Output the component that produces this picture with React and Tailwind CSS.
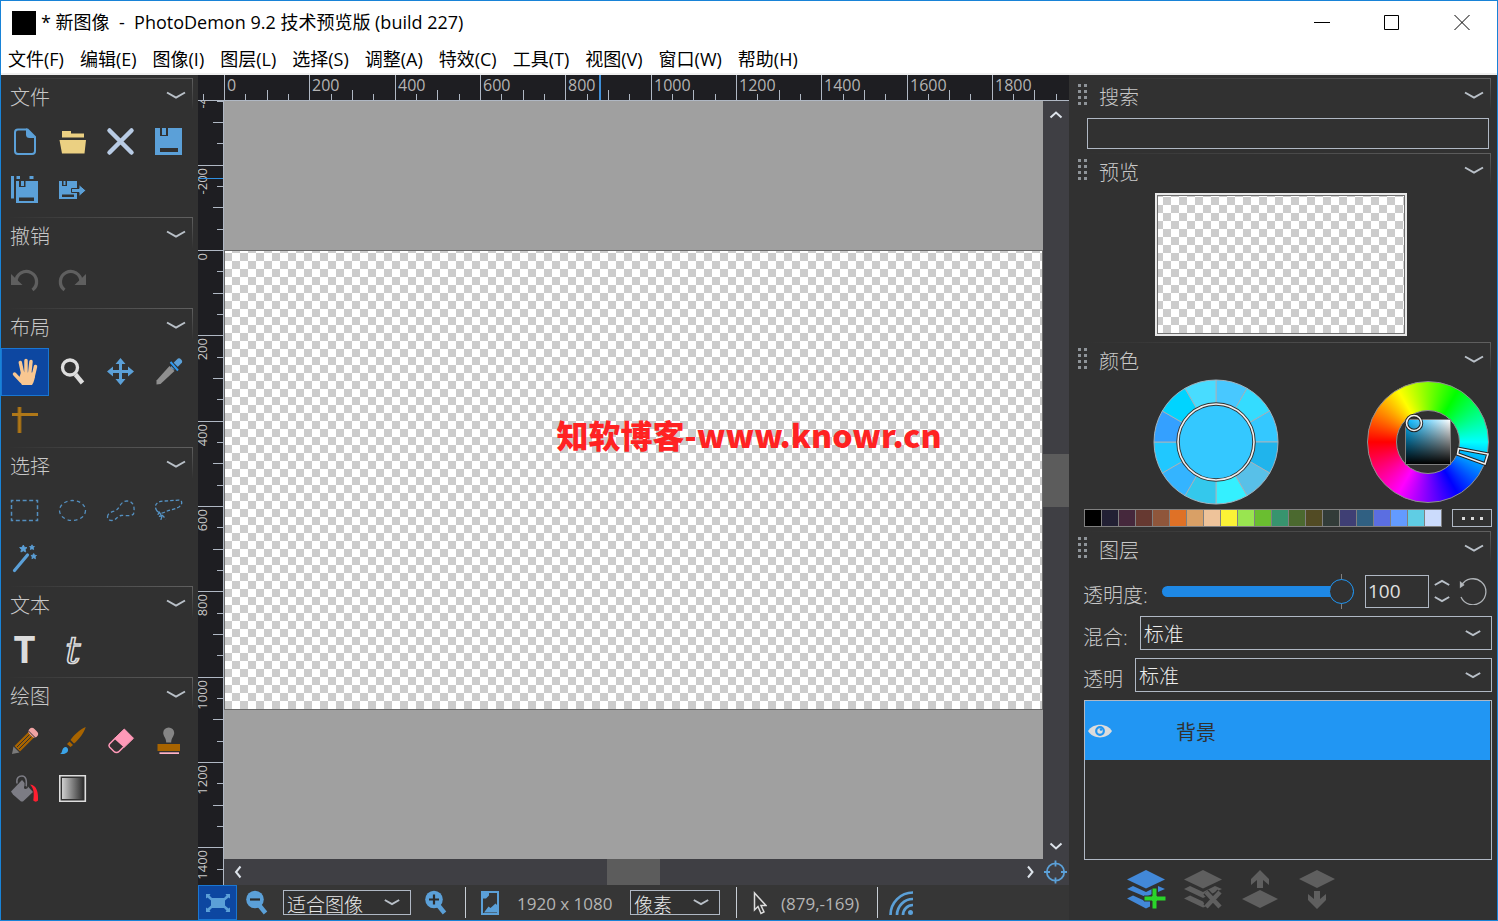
import React, { useState } from "react";

const MENUS = [
  "文件(F)",
  "编辑(E)",
  "图像(I)",
  "图层(L)",
  "选择(S)",
  "调整(A)",
  "特效(C)",
  "工具(T)",
  "视图(V)",
  "窗口(W)",
  "帮助(H)",
];

const SWATCHES = [
  "#000000", "#222034", "#45283c", "#663931", "#8f563b", "#df7126", "#d9a066",
  "#eec39a", "#fbf236", "#99e550", "#6abe30", "#37946e", "#4b692f", "#524b24",
  "#323c39", "#3f3f74", "#306082", "#5b6ee1", "#639bff", "#5fcde4", "#cbdbfc",
];

// Clockwise from twelve o'clock
const VARIANTS = [
  "#48c8ff", "#34dcff", "#34c8ff", "#20b4ec", "#58c0e8", "#34f0ff",
  "#34c8ec", "#34b4ff", "#20c8ff", "#34a0ff", "#00d4ff", "#48dcff",
];

const BLUE = "#5ba0d8";
const DIM = "#5f5f5f";
const BG = "#313131";

// ---------- toolbox icons, all drawn on a 48px button ----------

function Glyph({ children }) {
  return (
    <svg viewBox="0 0 48 48" className="size-12 overflow-visible" fill="none" aria-hidden="true">
      {children}
    </svg>
  );
}

const ICONS = {
  new: (
    <>
      <path d="M26 11.500H17a3 3 0 0 0-3 3V33a3 3 0 0 0 3 3H31a3 3 0 0 0 3-3V19" stroke={BLUE} strokeWidth="2" />
      <path d="M25 10.500h2L35 18.500v1.500h-6.500a3.500 3.500 0 0 1-3.500-3.500z" fill={BLUE} />
    </>
  ),
  open: (
    <path d="M13 13h9v2.500h13v4H13zM10.500 22H37l-1.500 13.500h-22.500z" fill="#ebd082" />
  ),
  close: (
    <path d="M12.500 12.500l22 22M34.500 12.500l-22 22" stroke="#b8cbe4" strokeWidth="4.500" strokeLinecap="round" />
  ),
  save: (
    <>
      <path d="M10 10h27v27H10z" fill={BLUE} />
      <path d="M15 10h8v8h-8zM15 30h18v4H15z" fill={BG} />
      <path d="M17 10h4v7h-4z" fill={BLUE} />
    </>
  ),
  saveAll: (
    <>
      <path d="M10 10h3v22.500h-3zM15.500 10H19v3h-3.500zM28.500 10h4v3h-4zM15 15h22v22H15z" fill={BLUE} />
      <path d="M18 15h6.500v6H18zM18 31.500h15v3.500H18z" fill={BG} />
      <path d="M20 15h3v5h-3z" fill={BLUE} />
    </>
  ),
  saveAs: (
    <>
      <path d="M10 15h18v18H10z" fill={BLUE} />
      <path d="M13 15h5v5h-5zM13 28.500h12v2.500H13z" fill={BG} />
      <path d="M14.500 15h2v4h-2z" fill={BLUE} />
      <path d="M22.500 22.500H30v-4l7 6-7 6v-4h-7.500z" fill={BLUE} stroke={BG} strokeWidth="1" />
    </>
  ),
  undo: (
    <>
      <path d="M15 24.500A10.300 10.300 0 1 1 31.500 33" stroke={DIM} strokeWidth="3.300" />
      <path d="M10 17v11h11.500z" fill={DIM} />
    </>
  ),
  redo: (
    <>
      <path d="M32 24.500A10.300 10.300 0 1 0 15.500 33" stroke={DIM} strokeWidth="3.300" />
      <path d="M37 17v11H25.500z" fill={DIM} />
    </>
  ),
  hand: (
    <>
      <path d="M19.300 14.500L22 27M25 12.500V27M30 13.500L28.500 27M34.500 18.500L32 29" stroke="#f9c791" strokeWidth="3.500" strokeLinecap="round" />
      <path d="M13.500 26l6.500 7" stroke="#f9c791" strokeWidth="3.500" strokeLinecap="round" />
      <path d="M20 24.500h14c0 5-.5 9-3 12.500H21l-3.500-5.500z" fill="#f9c791" />
    </>
  ),
  zoom: (
    <>
      <circle cx="21" cy="19.500" r="7.500" stroke="#dedede" strokeWidth="3.300" />
      <path d="M26.500 26.500l7 8.500" stroke="#dedede" strokeWidth="4.500" />
    </>
  ),
  move: (
    <>
      <path d="M23.500 13v21M13 23.500h21" stroke={BLUE} strokeWidth="3" />
      <path d="M23.500 10l5 6h-10zM23.500 37l5-6h-10zM10 23.500l6-5v10zM37 23.500l-6-5v10z" fill={BLUE} />
    </>
  ),
  picker: (
    <>
      <path d="M11.500 36.500v-4L24.500 18l5 5L15.500 36z" fill="#8f8f8f" />
      <path d="M29 18.500l5-5" stroke={BLUE} strokeWidth="6" strokeLinecap="round" />
      <path d="M25 14l8.500 8.500" stroke="#313131" strokeWidth="4" />
      <path d="M25.500 14l7.500 8.500" stroke="#2f9af0" strokeWidth="2" />
    </>
  ),
  guides: (
    <>
      <path d="M18.500 11v26" stroke="#8f6216" strokeWidth="4" />
      <path d="M11 18.500h26" stroke="#b07818" strokeWidth="3" />
      <path d="M18.500 11v26" stroke="#b07818" strokeWidth="2" />
    </>
  ),
  rect: (
    <rect x="10.500" y="13.500" width="26" height="20" stroke={BLUE} strokeWidth="1.500" strokeDasharray="4 2.570" strokeDashoffset="2" opacity=".85" />
  ),
  ellipse: (
    <ellipse cx="23.500" cy="23.500" rx="13" ry="10" stroke={BLUE} strokeWidth="1.300" strokeDasharray="3.500 3" opacity=".85" />
  ),
  lasso: (
    <path d="M10.500 30C10.500 25 17 25 20 22.500C23 20 24 14 30 14C37 14 38 21 36.500 27C34 30 28 28 24 28.500C20 29.500 19 33.500 15 33.500C12 33.500 10.500 32 10.500 30Z" stroke={BLUE} strokeWidth="1.300" strokeDasharray="3.500 2.500" opacity=".85" />
  ),
  polygon: (
    <g stroke={BLUE} strokeWidth="1.300" strokeDasharray="3.500 2" opacity=".9">
      <path d="M12 24C8 18 12 14 20 14L31 13.300C38 12 38 17 34 20C28 23 24 23 20 25C17 27 14 26 12 24Z" />
      <path d="M15 25C11 28 13 31 18 28M14 25l3 4-1.500 5M17 28l4 4" />
    </g>
  ),
  wand: (
    <>
      <path d="M13.500 35.500L26.500 20" stroke={BLUE} strokeWidth="3.200" strokeLinecap="round" />
      <path d="M22.300 10l1.200 2.300 2.500.3-1.800 1.800.5 2.600-2.400-1.200-2.400 1.200.5-2.600-1.800-1.800 2.500-.3zM31 9.800l.8 1.600 1.700.2-1.200 1.200.3 1.800-1.600-.9-1.600.9.300-1.800-1.200-1.200 1.700-.2zM32.700 18.500l.9 1.700 1.900.3-1.400 1.300.4 2-1.800-1-1.800 1 .4-2-1.400-1.300 1.900-.3z" fill={BLUE} stroke={BLUE} strokeWidth=".8" />
    </>
  ),
  text: (
    <text x="23.500" y="37" textAnchor="middle" fontSize="38" className="font-['Open_Sans',sans-serif] font-bold" fill="#dcdcdc">
      T
    </text>
  ),
  fancyText: (
    <text x="24" y="37" textAnchor="middle" fontSize="38" className="font-['DejaVu_Serif',serif] italic" stroke="#dcdcdc" strokeWidth="1.600">
      t
    </text>
  ),
  pencil: (
    <>
      <path d="M28 14.500L13.500 29l5.500 5.500L33.500 20z" fill="#a86400" />
      <path d="M28.500 17.500L16 30M30.500 19.500L18 32" stroke={BG} strokeWidth="1" />
      <path d="M11 37l1.500-7.500 6 6z" fill="#7a7a7a" />
      <path d="M31 14.500l2.500 2.500" stroke="#f0a3a3" strokeWidth="7" strokeLinecap="round" />
      <path d="M27 13.500l7.500 7.500" stroke={BG} strokeWidth="1" />
    </>
  ),
  brush: (
    <>
      <path d="M36.700 10C35 16 30 22.500 25 26.500L21.500 23C25 17.500 31 12.500 36.700 10Z" fill="#a86400" />
      <path d="M20.500 24.500l3.500 3.500-2.500 2-3.500-3z" fill="#a86400" />
      <path d="M11 37c2.500-1 1.500-4 3.500-6s5-.5 4.500 2.500S14 37.500 11 37z" fill="#3ba4e8" />
    </>
  ),
  eraser: (
    <>
      <path d="M27.300 12l9.200 9.300-9 8.700-9.500-9z" fill="#ff99b8" stroke="#ff99b8" strokeLinejoin="round" />
      <path d="M18 21.500l-5.500 5.500a2.500 2.500 0 0 0 0 3L17 34.500a3.500 3.500 0 0 0 5 0l5-5z" stroke="#ff99b8" strokeWidth="1.500" />
    </>
  ),
  stamp: (
    <>
      <path d="M23.700 10.500a5.500 5.500 0 0 1 5.500 5.500c0 3-3 5-3 9.500h-5c0-4.500-3-6.500-3-9.500a5.500 5.500 0 0 1 5.500-5.500z" fill="#858585" />
      <path d="M12.500 27h22.500v7H12.500z" fill="#a86400" />
      <path d="M14.500 35.300H34v1.700H14.500z" fill="#ffb3c8" />
    </>
  ),
  bucket: (
    <>
      <path d="M21 15L10 26.500 12 29.500 20 36.500h2L32 27z" fill="#7c7c84" />
      <path d="M16 18.500C15 12.500 18 11 21 11C25 11 26 15 25 23" stroke={BG} strokeWidth="3.500" />
      <path d="M16 18.500C15 12.500 18 11 21 11C25 11 26 15 25 23" stroke="#7c7c84" strokeWidth="1.500" />
      <circle cx="24.500" cy="22.500" r="1.500" fill={BG} />
      <path d="M29 19.500C36 20 37.500 28 37 35.500C36 37 33.500 37 32.300 35.500C33 29 33.500 24 29 19.500Z" fill="#ff1f30" />
    </>
  ),
  gradient: (
    <>
      <defs>
        <linearGradient id="toolGradient">
          <stop offset="0" stopColor="#cfcfcf" />
          <stop offset="1" stopColor="#313131" />
        </linearGradient>
      </defs>
      <path d="M10.800 10.800h25.500v25.500H10.800z" stroke="#dedede" strokeWidth="1.600" />
      <path d="M13 13h21v21H13z" fill="url(#toolGradient)" />
    </>
  ),
};

const TOOL_GROUPS = [
  { title: "文件", tools: [["new", "新建"], ["open", "打开"], ["close", "关闭"], ["save", "保存"], ["saveAll", "保存副本"], ["saveAs", "另存为"]] },
  { title: "撤销", tools: [["undo", "撤销"], ["redo", "重做"]] },
  { title: "布局", tools: [["hand", "手形"], ["zoom", "缩放"], ["move", "移动"], ["picker", "取色"], ["guides", "参考线"]] },
  { title: "选择", tools: [["rect", "矩形选择"], ["ellipse", "椭圆选择"], ["lasso", "套索"], ["polygon", "多边形套索"], ["wand", "魔棒"]] },
  { title: "文本", tools: [["text", "文本"], ["fancyText", "艺术文本"]] },
  { title: "绘图", tools: [["pencil", "铅笔"], ["brush", "画笔"], ["eraser", "橡皮擦"], ["stamp", "图章"], ["bucket", "填充"], ["gradient", "渐变"]] },
];

function Chevron({ className = "", up = false, thin = false }) {
  return (
    <svg viewBox="0 0 20 8" className={className || "w-5 h-2"} fill="none" stroke="#b9c0c8" strokeWidth={thin ? 2.5 : 2} aria-hidden="true">
      <path d={up ? "M1 6.500L10 1.500L19 6.500" : "M1 1.500L10 6.500L19 1.500"} />
    </svg>
  );
}

function PanelHeader({ title, grip }) {
  return (
    <div className="relative flex h-10 items-center">
      <span className="absolute top-0 right-0 left-2 h-px bg-linear-to-r from-transparent to-[#606060]" />
      <span className="absolute top-0 right-0 h-8 w-px bg-linear-to-b from-[#606060] to-transparent" />
      {grip ? (
        <span className="mr-3 mb-2 grid grid-cols-2 gap-[3px]">
          {Array.from({ length: 8 }, (_, i) => (
            <span key={i} className="size-[3px] bg-[#8f9499]" />
          ))}
        </span>
      ) : null}
      <h2 className="flex-1 pb-px text-xl leading-6 font-light text-[#c8c8c8]">{title}</h2>
      <button type="button" aria-label={title} className="mr-[7px] mb-1.5 flex">
        <Chevron />
      </button>
    </div>
  );
}

function Toolbox() {
  const [active, setActive] = useState("hand");
  return (
    <aside className="w-[197px] shrink-0 overflow-hidden bg-[#313131] pt-[3px]">
      {TOOL_GROUPS.map((group) => (
        <section key={group.title} className="mb-[3px] w-48">
          <div className="[&_h2]:pl-[9px]">
            <PanelHeader title={group.title} />
          </div>
          <div className="grid grid-cols-4">
            {group.tools.map(([id, label]) => (
              <button
                key={id}
                type="button"
                aria-label={label}
                onClick={() => setActive(id)}
                className={
                  active === id
                    ? "size-12 bg-[#0d47a1] outline-1 -outline-offset-1 outline-[#1976d2]"
                    : "size-12"
                }
              >
                <Glyph>{ICONS[id]}</Glyph>
              </button>
            ))}
          </div>
        </section>
      ))}
    </aside>
  );
}

// ---------- rulers ----------

const PX_PER_UNIT = 819 / 1920;

function ticks(from, to) {
  const out = [];
  for (let v = from; v <= to; v += 50) {
    out.push({ v, pos: Math.round(v * PX_PER_UNIT), size: v % 200 === 0 ? 26 : v % 100 === 0 ? 10 : 6 });
  }
  return out;
}

function TopRuler() {
  return (
    <div className="h-[26px] shrink-0 overflow-hidden border-b border-[#b0b8c4] bg-[#1e1e22]">
      <svg className="h-[25px] w-full" aria-hidden="true">
        {ticks(-50, 1950).map(({ v, pos, size }) => (
          <g key={v}>
            <path d={`M${pos + 26.5} 25v-${size}`} stroke="#b0b8c4" />
            {v % 200 === 0 ? (
              <text x={pos + 29} y="16" fontSize="16" fill="#b4b4b4">
                {v}
              </text>
            ) : null}
          </g>
        ))}
        <path d="M402 0v25" stroke="#3f8fd8" strokeWidth="2" />
      </svg>
    </div>
  );
}

function SideRuler() {
  return (
    <div className="w-[26px] shrink-0 overflow-hidden border-r border-[#b0b8c4] bg-[#1e1e22]">
      <svg className="h-full w-[25px]" aria-hidden="true">
        {ticks(-400, 1450).map(({ v, pos, size }) => (
          <g key={v}>
            <path d={`M25 ${pos + 149.5}h-${size}`} stroke="#b0b8c4" />
            {v % 200 === 0 ? (
              <text transform={`translate(9 ${pos + 152}) rotate(-90)`} textAnchor="end" fontSize="13" fill="#c8c8c8">
                {v}
              </text>
            ) : null}
          </g>
        ))}
        <path d="M0 77.500h25" stroke="#2f8fe0" />
      </svg>
    </div>
  );
}

function ScrollArrow({ d, label }) {
  return (
    <button type="button" aria-label={label} className="flex size-[26px] shrink-0 items-center justify-center">
      <svg viewBox="0 0 14 14" className="size-3.5" fill="none" stroke="#dde3ea" strokeWidth="2" aria-hidden="true">
        <path d={d} />
      </svg>
    </button>
  );
}

function Workspace() {
  return (
    <div className="flex min-h-0 flex-1 flex-col">
      <TopRuler />
      <div className="flex min-h-0 flex-1">
        <SideRuler />
        <div className="flex min-w-0 flex-1 flex-col">
          <div className="flex min-h-0 flex-1">
            <div className="flex min-w-0 flex-1 items-center overflow-hidden bg-[#a0a0a0]">
              <div className="aspect-[819/460] w-full border border-[#6a6a6a] bg-[conic-gradient(#fff_25%,#ccc_0_50%,#fff_0_75%,#ccc_0)] bg-[length:16px_16px] bg-[position:-1px_2px]" />
            </div>
            <div className="flex w-[26px] shrink-0 flex-col bg-[#3f3f44]">
              <ScrollArrow label="向上滚动" d="M1.500 10.500L7 5.500L12.500 10.500" />
              <div className="flex flex-1 items-center">
                <div className="h-[53px] w-full bg-[#5c5c5c]" />
              </div>
              <ScrollArrow label="向下滚动" d="M1.500 4.500L7 9.500L12.500 4.500" />
            </div>
          </div>
          <div className="flex h-[26px] shrink-0 bg-[#3f3f44]">
            <ScrollArrow label="向左滚动" d="M10.500 1.500L6 7L10.500 12.500" />
            <div className="flex flex-1 justify-center">
              <div className="h-full w-[53px] bg-[#5c5c5c]" />
            </div>
            <ScrollArrow label="向右滚动" d="M5 1.500L9.500 7L5 12.500" />
            <button type="button" aria-label="居中" className="size-[26px]">
              <svg viewBox="0 0 26 26" className="size-[26px]" fill="none" stroke={BLUE} strokeWidth="1.800" aria-hidden="true">
                <circle cx="12.500" cy="13" r="8.700" />
                <path d="M12.500 1.500v6M12.500 18.500v6M1 13h6M18 13h6" />
              </svg>
            </button>
          </div>
        </div>
      </div>
    </div>
  );
}

// ---------- status bar ----------

function StatusSelect({ label, value, className }) {
  return (
    <div className={`relative h-[25px] ${className}`}>
      <select
        aria-label={label}
        className="h-full w-full appearance-none overflow-hidden border border-[#b0b8c4] bg-[#313131] pl-[3px] text-[19px] leading-7 font-light text-[#e8e8e8] outline-none"
      >
        <option>{value}</option>
      </select>
      <Chevron thin className="pointer-events-none absolute top-2 right-[11px] h-2 w-4" />
    </div>
  );
}

function Lens({ plus }) {
  return (
    <svg viewBox="0 0 24 26" className="h-[26px] w-6" fill="none" aria-hidden="true">
      <path d="M14 15l6.500 8" stroke={BLUE} strokeWidth="4.500" />
      <circle cx="10" cy="9.500" r="8.800" fill={BLUE} />
      <path d={plus ? "M5 9.500h10M10 4.500v10" : "M5 9.500h10"} stroke="#2b2b2b" strokeWidth="2.200" />
    </svg>
  );
}

function Divider({ className }) {
  return <span className={`h-[31px] w-px bg-[#c8ced6] ${className}`} />;
}

function StatusBar() {
  return (
    <footer className="flex h-[35px] shrink-0 items-center bg-[#363636] text-[17px] text-[#b4b4b4]">
      <button type="button" aria-label="适合窗口" className="flex h-full w-[39px] items-center justify-center border border-[#1976d2] bg-[#0d47a1]">
        <svg viewBox="0 0 24 18" className="h-[18px] w-6" fill={BLUE} aria-hidden="true">
          <path d="M0 0h4.500L3.500 1.500 6 4h12l2.500-2.500L19.500 0H24v4.500l-1.500-1L19 6.500v5l3.500 3 1.500-1V18h-4.500l1-1.500L18 14H6l-2.500 2.500 1 1.500H0v-4.500l1.500 1 3.500-3v-5l-3.500-3L0 4.500z" />
        </svg>
      </button>
      <button type="button" aria-label="缩小" className="ml-2">
        <Lens />
      </button>
      <StatusSelect label="缩放" value="适合图像" className="ml-3.5 w-32" />
      <button type="button" aria-label="放大" className="ml-[13px]">
        <Lens plus />
      </button>
      <Divider className="ml-[17px]" />
      <svg viewBox="0 0 18 24" className="ml-[15px] h-6 w-[18px]" fill="none" aria-hidden="true">
        <path d="M1 1h16v22H1z" stroke={BLUE} strokeWidth="2" />
        <path d="M2 2h6v2.500L5 7.500H2zM3 21.500l4.500-6 2 1.500 5-4.500 2 2v7z" fill={BLUE} />
      </svg>
      <span className="ml-[18px] w-[98px] pt-0.5 whitespace-nowrap">1920 x 1080</span>
      <StatusSelect label="单位" value="像素" className="ml-[15px] w-[90px]" />
      <Divider className="ml-4" />
      <svg viewBox="0 0 14 24" className="ml-4 h-6 w-3.5" fill="none" stroke="#dcdcdc" strokeWidth="1.500" aria-hidden="true">
        <path d="M1.500 2v17l3.500-3.500 3 7 3-1.500-3-6.500h5z" />
      </svg>
      <span className="ml-3.5 w-[82px] pt-0.5 whitespace-nowrap">(879,-169)</span>
      <Divider className="ml-3.5" />
      <svg viewBox="0 0 24 24" className="ml-[11px] size-6" fill="none" stroke={BLUE} strokeWidth="2.700" aria-hidden="true">
        <path d="M1.500 24A22.500 22.500 0 0 1 24 1.500M8 24A16 16 0 0 1 24 8M14 24A10 10 0 0 1 24 14" />
        <circle cx="21.500" cy="21.500" r="2.500" fill={BLUE} stroke="none" />
      </svg>
    </footer>
  );
}

// ---------- right panel ----------

function VariantWheel() {
  const point = (deg, r) => {
    const a = ((deg - 90) * Math.PI) / 180;
    return `${63 + r * Math.cos(a)} ${63 + r * Math.sin(a)}`;
  };
  return (
    <svg viewBox="0 0 126 126" className="size-[126px]" aria-hidden="true">
      {VARIANTS.map((color, i) => (
        <path
          key={i}
          d={`M63 63L${point(i * 30, 62)}A62 62 0 0 1 ${point(i * 30 + 30, 62)}Z`}
          fill={color}
          stroke="#a0b4c0"
        />
      ))}
      <circle cx="63" cy="63" r="38" fill="#34c8ff" stroke="#333" strokeWidth="3.500" />
      <circle cx="63" cy="63" r="38" fill="none" stroke="#f0f0f0" strokeWidth="1.600" />
    </svg>
  );
}

function HueWheel() {
  return (
    <div className="relative flex size-[122px] items-center justify-center rounded-full border border-[#909090] bg-[conic-gradient(from_270deg,#f00,#ff0,#0f0,#0ff,#00f,#f0f,#f00)]">
      <div className="flex size-16 items-center justify-center rounded-full border border-[#909090] bg-[#313131]">
        <div className="size-[46px] border border-[#808080] bg-[linear-gradient(to_top,#000,transparent),linear-gradient(to_right,#00b4ff,#fff)]" />
      </div>
      <svg viewBox="0 0 122 122" className="absolute -top-px -left-px size-[122px] overflow-visible" fill="none" aria-hidden="true">
        <circle cx="47" cy="42" r="7.500" stroke="#222" strokeWidth="3.500" />
        <circle cx="47" cy="42" r="7.500" stroke="#f0f0f0" strokeWidth="1.600" />
        <path d="M91.500 67.500L121 73L118 83L90.500 73Z" stroke="#222" strokeWidth="3.500" />
        <path d="M91.500 67.500L121 73L118 83L90.500 73Z" stroke="#f0f0f0" strokeWidth="1.600" />
      </svg>
    </div>
  );
}

function LayerSelect({ id, label }) {
  return (
    <div className="flex h-[34px] items-center">
      <label htmlFor={id} className="pt-2.5 pr-3 text-xl leading-6 font-light text-[#c8c8c8]">
        {label}
      </label>
      <div className="relative flex-1">
        <select
          id={id}
          className="h-[34px] w-full appearance-none border border-[#b0b8c4] bg-[#313131] pt-[3px] pl-[3px] text-xl font-light text-[#ececec] outline-none"
        >
          <option>标准</option>
        </select>
        <Chevron thin className="pointer-events-none absolute top-[13px] right-[11px] h-2 w-4" />
      </div>
    </div>
  );
}

function OpacityRow() {
  const [opacity, setOpacity] = useState(100);
  return (
    <div className="flex h-[34px] items-center pr-[5px]">
      <label htmlFor="opacity" className="w-[79px] pt-2.5 text-xl leading-6 font-light whitespace-nowrap text-[#c8c8c8]">
        透明度:
      </label>
      <div className="relative flex flex-1 items-center">
        <span className="absolute right-3 h-[35px] w-px bg-[#808080]" />
        <input
          id="opacity"
          type="range"
          value={opacity}
          onChange={(e) => setOpacity(Number(e.target.value))}
          className="relative h-6 w-full appearance-none bg-transparent [&::-webkit-slider-runnable-track]:h-[11px] [&::-webkit-slider-runnable-track]:rounded-full [&::-webkit-slider-runnable-track]:bg-[#1e88e5] [&::-webkit-slider-thumb]:-mt-[7px] [&::-webkit-slider-thumb]:size-[25px] [&::-webkit-slider-thumb]:appearance-none [&::-webkit-slider-thumb]:rounded-full [&::-webkit-slider-thumb]:border [&::-webkit-slider-thumb]:border-solid [&::-webkit-slider-thumb]:border-[#2196f3] [&::-webkit-slider-thumb]:bg-[#313131]"
        />
      </div>
      <input
        type="text"
        inputMode="numeric"
        aria-label="透明度数值"
        value={opacity}
        onChange={(e) => setOpacity(Number(e.target.value) || 0)}
        className="ml-[11px] h-[33px] w-16 border border-[#b0b8c4] bg-transparent pl-[2px] text-[19px] text-[#e0e0e0] outline-none"
      />
      <div className="ml-[5px] flex flex-col gap-2">
        <button type="button" aria-label="增加" className="flex">
          <Chevron thin up className="h-2 w-4" />
        </button>
        <button type="button" aria-label="减少" className="flex">
          <Chevron thin className="h-2 w-4" />
        </button>
      </div>
      <button type="button" aria-label="重置" className="ml-[9px]">
        <svg viewBox="0 0 28 28" className="size-7" fill="none" stroke="#b0b4b8" strokeWidth="1.300" aria-hidden="true">
          <path d="M2.500 8.500A13 13 0 1 1 2 20" />
          <path d="M1.500 5.500v4.500l3-2z" fill="#c0c4c8" />
        </svg>
      </button>
    </div>
  );
}

const LAYER_ACTIONS = [
  {
    label: "添加图层",
    icon: (
      <>
        <path d="M20 1L39 10.500 20 19.500 1 10.500z" fill="#4288d8" />
        <path d="M1 20l6-3 13 6 6-3v5l-6 3zM1 29.500l6-3 11 5 6-2v8l-4 2zM32 17l7 3-7 3z" fill="#4288d8" />
        <path d="M26 19h5v8h9v5h-9v8h-5v-8h-8v-5h8z" fill="#2ad52a" stroke={BG} />
      </>
    ),
  },
  {
    label: "删除图层",
    icon: (
      <>
        <path d="M20 1L39 10.500 20 19.500 1 10.500z" fill={DIM} />
        <path d="M1 20l6-3 13 6 12-6 7 3-19 9zM1 29.500l6-3 13 6 3 5-3 1z" fill={DIM} />
        <path d="M23 23l14 15M37 23L23 38" stroke={BG} strokeWidth="7" />
        <path d="M23 23l14 15M37 23L23 38" stroke={DIM} strokeWidth="4.500" />
      </>
    ),
  },
  {
    label: "上移图层",
    icon: <path d="M20 1l9 9v6l-6-5v8h-6v-8l-6 5v-6zM20 21l18 9-18 9-18-9z" fill={DIM} />,
  },
  {
    label: "下移图层",
    icon: <path d="M20 1l18 9-18 9-18-9zM17 22h6v8l6-5v6l-9 9-9-9v-6l6 5z" fill={DIM} />,
  },
];

function SidePanel() {
  return (
    <aside className="flex w-[428px] shrink-0 flex-col overflow-hidden bg-[#313131] pt-[3px] pr-1.5 pl-[9px]">
      <section>
        <PanelHeader grip title="搜索" />
        <input
          type="search"
          aria-label="搜索"
          className="mr-0.5 ml-[9px] block h-[31px] w-[402px] appearance-none border border-[#b0b8c4] bg-transparent px-1 text-lg text-white outline-none"
        />
      </section>
      <section className="mt-1">
        <PanelHeader grip title="预览" />
        <div className="ml-[77px] w-[252px] border-2 border-[#e8e8e8]">
          <div className="h-[139px] border border-[#707070] bg-[conic-gradient(#ccc_25%,#fff_0_50%,#ccc_0_75%,#fff_0)] bg-[length:16px_16px] bg-[position:-3px_1px]" />
        </div>
      </section>
      <section className="mt-1.5">
        <PanelHeader grip title="颜色" />
        <div className="-mt-[3px] flex items-center justify-between pr-0.5 pl-[75px]">
          <VariantWheel />
          <HueWheel />
        </div>
        <div className="mt-1 flex items-center justify-between pl-1.5">
          <div className="flex border-y border-l border-[#808080]">
            {SWATCHES.map((color) => (
              <button
                key={color}
                type="button"
                aria-label={color}
                className="h-4 w-[17px] border-r border-[#808080]"
                style={{ backgroundColor: color }}
              />
            ))}
          </div>
          <button type="button" aria-label="更多颜色" className="-mr-px flex h-[18px] w-10 items-center justify-center gap-1.5 border border-[#b0b8c4]">
            <span className="size-[3px] bg-[#d8d8d8]" />
            <span className="size-[3px] bg-[#d8d8d8]" />
            <span className="size-[3px] bg-[#d8d8d8]" />
          </button>
        </div>
      </section>
      <section className="mt-1">
        <PanelHeader grip title="图层" />
        <div className="-mr-px flex flex-col gap-2 pt-[3px] pl-[5px]">
          <OpacityRow />
          <LayerSelect id="blend" label="混合:" />
          <LayerSelect id="alpha" label="透明" />
          <ul className="ml-px h-40 border border-[#b0b8c4] pr-px">
            <li className="flex h-[59px] items-center bg-[#2196f3] pl-[3px]">
              <button type="button" aria-label="显示图层">
                <svg viewBox="0 0 24 14" className="h-3.5 w-6" fill="none" aria-hidden="true">
                  <path d="M0 7C5 -1.500 19 -1.500 24 7C19 15.500 5 15.500 0 7Z" fill="#dcdcdc" />
                  <circle cx="12" cy="7" r="3.800" stroke="#2196f3" strokeWidth="2.200" />
                  <circle cx="13" cy="5.500" r="1.300" fill="#2196f3" />
                </svg>
              </button>
              <span className="pt-1 pl-16 text-xl text-[#313131]">背景</span>
            </li>
          </ul>
        </div>
        <div className="mt-[9px] flex gap-[17px] pl-12">
          {LAYER_ACTIONS.map(({ label, icon }) => (
            <button key={label} type="button" aria-label={label}>
              <svg viewBox="0 0 40 40" className="size-10" fill="none" aria-hidden="true">
                {icon}
              </svg>
            </button>
          ))}
        </div>
      </section>
    </aside>
  );
}

export default function App() {
  return (
    <div className="relative flex h-screen flex-col overflow-hidden border border-[#1883d7] bg-white font-['Open_Sans','Noto_Sans_CJK_SC',sans-serif] text-black">
      <header className="flex h-11 shrink-0 items-center pl-[11px]">
        <span className="size-6 bg-black" />
        <h1 className="flex-1 pb-0.5 pl-[5px] text-lg whitespace-pre">
          * 新图像  -  PhotoDemon 9.2 技术预览版 (build 227)
        </h1>
        <div className="flex items-center gap-[54px] pr-[27px] pb-0.5">
          <button type="button" aria-label="最小化" className="flex">
            <svg viewBox="0 0 16 16" className="size-4" stroke="#000" fill="none" aria-hidden="true">
              <path d="M0 8.500h16" />
            </svg>
          </button>
          <button type="button" aria-label="最大化" className="flex">
            <svg viewBox="0 0 16 16" className="size-4" stroke="#000" fill="none" aria-hidden="true">
              <path d="M.5 1.500h14v14H.5z" />
            </svg>
          </button>
          <button type="button" aria-label="关闭" className="flex">
            <svg viewBox="0 0 16 16" className="size-4" stroke="#000" fill="none" aria-hidden="true">
              <path d="M.5 1l15 15M15.500 1L.5 16" />
            </svg>
          </button>
        </div>
      </header>
      <nav className="flex h-[30px] shrink-0 items-center gap-4 border-b-2 border-[#f0f0f0] pl-[7px] text-lg">
        {MENUS.map((item) => (
          <button key={item} type="button" className="whitespace-nowrap">
            {item}
          </button>
        ))}
      </nav>
      <div className="flex min-h-0 flex-1">
        <Toolbox />
        <main className="flex min-w-0 flex-1 flex-col">
          <Workspace />
          <StatusBar />
        </main>
        <SidePanel />
      </div>
      <p className="pointer-events-none absolute top-[409px] left-1/2 -translate-x-1/2 font-['Noto_Sans_CJK_SC',sans-serif] text-[32px] font-black whitespace-nowrap text-[#ff2222]">
        知软博客-www.knowr.cn
      </p>
    </div>
  );
}
